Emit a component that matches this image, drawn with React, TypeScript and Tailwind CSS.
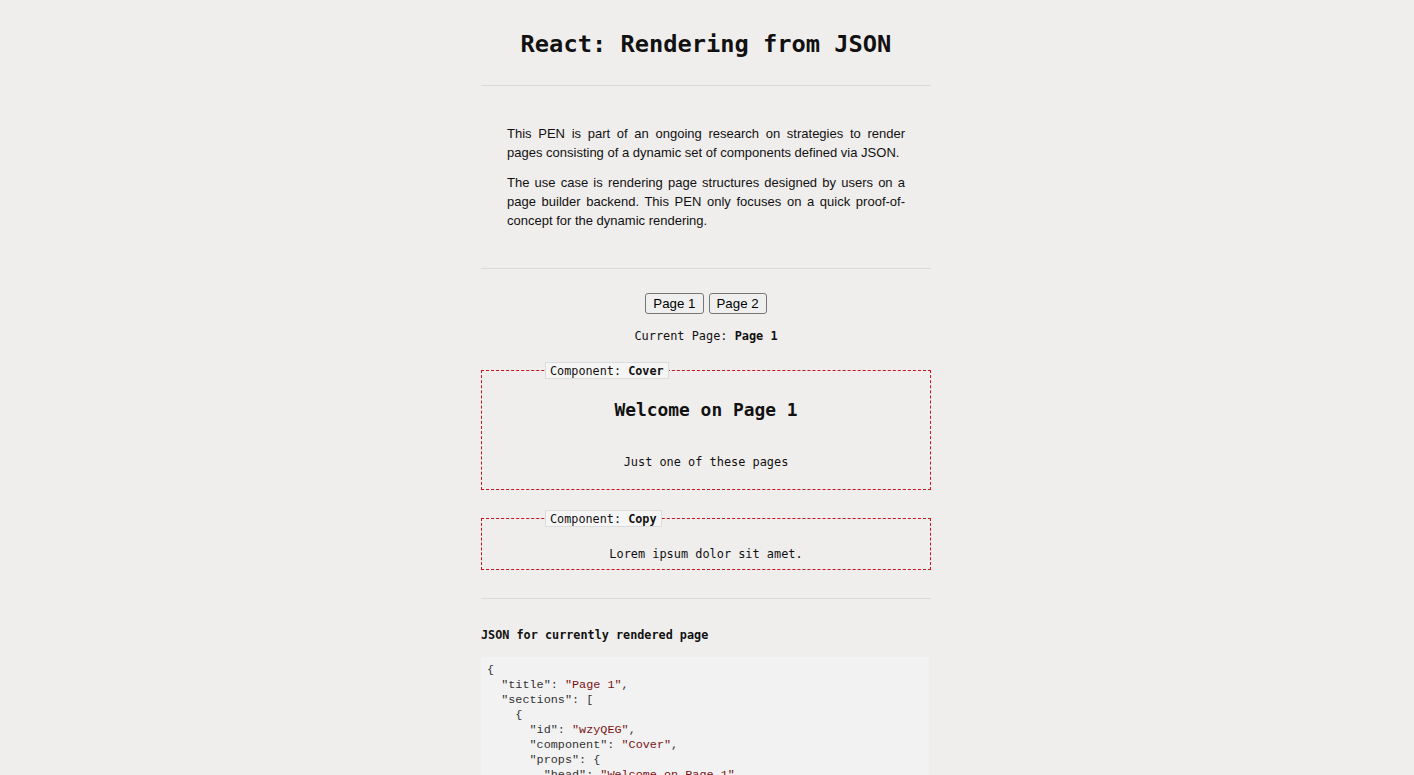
import React, { useState } from "react";

type Section = {
  id: string;
  component: "Cover" | "Copy";
  props: { [key: string]: string };
};

type Page = { title: string; sections: Section[] };

const pages: Page[] = [
  {
    title: "Page 1",
    sections: [
      {
        id: "wzyQEG",
        component: "Cover",
        props: { head: "Welcome on Page 1", subhead: "Just one of these pages" },
      },
      {
        id: "kJhGfD",
        component: "Copy",
        props: { text: "Lorem ipsum dolor sit amet." },
      },
    ],
  },
  {
    title: "Page 2",
    sections: [
      {
        id: "pLmNbV",
        component: "Copy",
        props: { text: "Consectetur adipiscing elit." },
      },
      {
        id: "qWeRtY",
        component: "Cover",
        props: { head: "Welcome on Page 2", subhead: "Another one of these pages" },
      },
    ],
  },
];

const mono = "font-['DejaVu_Sans_Mono','Liberation_Mono',monospace]";

const Frame: React.FC<{ name: string; first: boolean; children: React.ReactNode; className?: string }> = ({
  name,
  first,
  children,
  className,
}) => (
  <fieldset
    className={
      "border border-dashed border-[#c4161c] " + (first ? "mt-[18px] " : "mt-[20px] ") + (className || "")
    }
  >
    <legend className="ml-[63px] px-[4px] h-[17px] leading-[16px] bg-[#f6f5f5] border border-[#dcdcdc] text-[11.8px] text-[#111]">
      Component: <b>{name}</b>
    </legend>
    {children}
  </fieldset>
);

const Cover: React.FC<{ head: string; subhead: string; first: boolean }> = ({ head, subhead, first }) => (
  <Frame name="Cover" first={first} className="pt-[20px] pb-[19px]">
    <h2 className="text-center font-bold text-[17.9px] leading-[22px]">{head}</h2>
    <p className="text-center text-[11.9px] leading-[16px] mt-[33px]">{subhead}</p>
  </Frame>
);

const Copy: React.FC<{ text: string; first: boolean }> = ({ text, first }) => (
  <Frame name="Copy" first={first} className="pt-[19px] pb-[7px]">
    <p className="text-center text-[11.9px] leading-[16px]">{text}</p>
  </Frame>
);

// colours a JSON string: keys grey, string values dark red
const JsonView: React.FC<{ data: unknown }> = ({ data }) => {
  const lines = JSON.stringify(data, null, 2).split("\n");
  return (
    <pre className="bg-[#f3f2f2] pl-[6px] pt-[6px] pb-[10px] mt-[14px] text-[11.8px] leading-[15px] text-[#333] w-[448px] overflow-hidden">
      {lines.map((line, i) => {
        const m = line.match(/^(\s*)("[^"]*")(: )?(.*)$/);
        if (!m) return <div key={i}>{line}</div>;
        const [, indent, first, colon, rest] = m;
        if (colon) {
          const sm = rest.match(/^("[^"]*")(,?)$/);
          return (
            <div key={i}>
              {indent}
              {first}
              {colon}
              {sm ? (
                <>
                  <span className="text-[#7a1212]">{sm[1]}</span>
                  {sm[2]}
                </>
              ) : (
                rest
              )}
            </div>
          );
        }
        return (
          <div key={i}>
            {indent}
            <span className="text-[#7a1212]">{first}</span>
            {rest}
          </div>
        );
      })}
    </pre>
  );
};

const App: React.FC = () => {
  const [current, setCurrent] = useState(0);
  const page = pages[current];

  return (
    <div className={"min-h-screen bg-[#f0eeed] text-[#111] pr-[2px] " + mono}>
      <div className="w-[450px] mx-auto">
        <header className="h-[86px] border-b border-[#dcdad9] pt-[30px]">
          <h1 className="text-center font-bold text-[23.7px] leading-[28px]">
            React: Rendering from JSON
          </h1>
        </header>

        <section className="border-b border-[#dcdad9] px-[26px] pt-[38px] pb-[38px] font-['Liberation_Sans',Arial,sans-serif] text-[13px] leading-[19px] text-justify space-y-[11px]">
          <p>
            This PEN is part of an ongoing research on strategies to render pages consisting of a
            dynamic set of components defined via JSON.
          </p>
          <p>
            The use case is rendering page structures designed by users on a page builder backend.
            This PEN only focuses on a quick proof-of-concept for the dynamic rendering.
          </p>
        </section>

        <section className="border-b border-[#dcdad9] pt-[24px] pb-[28px]">
          <div className="flex justify-center gap-[5px]">
            {pages.map((p, i) => (
              <button
                key={p.title}
                onClick={() => setCurrent(i)}
                className="h-[21px] px-[7px] border border-[#767676] rounded-[3px] bg-[#efefef] hover:bg-[#e5e5e5] font-['Liberation_Sans',Arial,sans-serif] text-[13.3px] leading-[19px] text-black"
              >
                {p.title}
              </button>
            ))}
          </div>
          <p className="text-center text-[11.9px] leading-[16px] mt-[14px]">
            Current Page: <b>{page.title}</b>
          </p>

          {page.sections.map((s, i) =>
            s.component === "Cover" ? (
              <Cover key={s.id} first={i === 0} head={s.props.head} subhead={s.props.subhead} />
            ) : (
              <Copy key={s.id} first={i === 0} text={s.props.text} />
            )
          )}
        </section>

        <section className="pt-[28px] pb-[30px]">
          <h3 className="font-bold text-[11.8px] leading-[16px]">JSON for currently rendered page</h3>
          <JsonView data={page} />
        </section>
      </div>
    </div>
  );
};

export default App;
